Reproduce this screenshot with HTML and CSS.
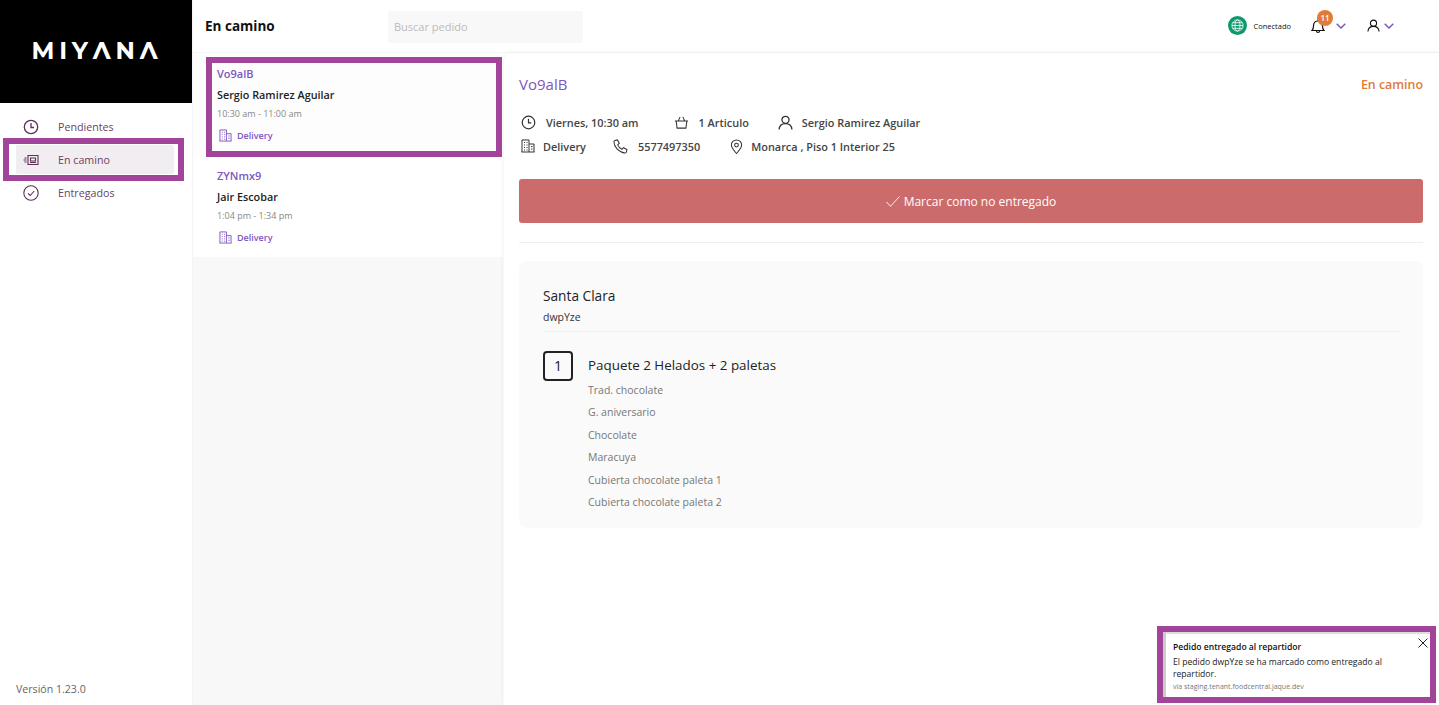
FILE: index.html
```html
<!DOCTYPE html>
<html lang="es">
<head>
  <meta charset="UTF-8">
  <meta name="viewport" content="width=device-width, initial-scale=1.0">
  <title>Miyana - En camino</title>
  <link rel="stylesheet" href="styles.css">
</head>
<body>
  <svg class="defs" width="0" height="0">
    <symbol id="i-building" viewBox="0 0 14 14">
      <path d="M1 13V1h7v12M8 5h5v8M.5 13h13M3 3.5h1M5.500 3.5h1M3 6h1M5.500 6h1M3 8.5h1M5.500 8.5h1M3 11h1M5.500 11h1M10 7.500h1.500M10 10h1.500" fill="none" stroke="currentColor" stroke-width="1"/>
    </symbol>
    <symbol id="i-clock" viewBox="0 0 16 16">
      <circle cx="8" cy="8" r="6.7" fill="none" stroke="currentColor" stroke-width="1.3"/>
      <path d="M8 4v4.500h3" fill="none" stroke="currentColor" stroke-width="1.3"/>
    </symbol>
    <symbol id="i-chevron" viewBox="0 0 10 6">
      <path d="M.7.800 5 5l4.300-4.200" fill="none" stroke="currentColor" stroke-width="1.5"/>
    </symbol>
    <symbol id="i-user" viewBox="0 0 14 14">
      <circle cx="7" cy="4.5" r="3.3" fill="none" stroke="currentColor" stroke-width="1.2"/>
      <path d="M1 13.500c.3-3.500 2.800-5.500 6-5.500s5.700 2 6 5.500" fill="none" stroke="currentColor" stroke-width="1.2"/>
    </symbol>
  </svg>

  <aside class="sidebar">
    <div class="logo">MIYΛNΛ</div>
    <nav class="nav">
      <a class="nav-item">
        <svg class="nav-icon"><use href="#i-clock"/></svg>
        Pendientes
      </a>
      <a class="nav-item active marked">
        <svg class="nav-icon" viewBox="0 0 16 16">
          <path d="M5 3.500h10v9H5zM7.500 6h5v3h-5zM7 10.500h6M1.500 6h2M.5 8h3M1.500 10h2" fill="none" stroke="currentColor" stroke-width="1.1"/>
        </svg>
        En camino
      </a>
      <a class="nav-item">
        <svg class="nav-icon" viewBox="0 0 16 16">
          <circle cx="8" cy="8" r="7.2" fill="none" stroke="currentColor" stroke-width="1.1"/>
          <path d="m5 8.300 2.200 2.200L11.200 6" fill="none" stroke="currentColor" stroke-width="1.1"/>
        </svg>
        Entregados
      </a>
    </nav>
    <div class="version">Versión 1.23.0</div>
  </aside>

  <div class="main">
    <header class="topbar">
      <h1 class="page-title">En camino</h1>
      <div class="search">Buscar pedido</div>
      <div class="top-actions">
        <div class="status">
          <span class="status-dot">
            <svg width="13" height="13" viewBox="0 0 14 14">
              <g fill="none" stroke="#fff" stroke-width=".9">
                <circle cx="7" cy="7" r="6"/>
                <ellipse cx="7" cy="7" rx="2.7" ry="6"/>
                <path d="M1 7h12M1.800 4h10.400M1.800 10h10.400"/>
              </g>
            </svg>
          </span>
          Conectado
        </div>
        <div class="bell">
          <svg width="14" height="16" viewBox="0 0 14 16">
            <path d="M1 12.500c1.200-1 1.500-2.200 1.500-4.500 0-3 1.800-5 4.500-5s4.500 2 4.500 5c0 2.300.3 3.500 1.500 4.500zM5.500 13c0 2 3 2 3 0M7 1v2" fill="none" stroke="#111" stroke-width="1.2"/>
          </svg>
          <span class="badge">11</span>
        </div>
        <svg class="chevron chevron-bell"><use href="#i-chevron"/></svg>
        <svg class="top-user"><use href="#i-user"/></svg>
        <svg class="chevron"><use href="#i-chevron"/></svg>
      </div>
    </header>

    <div class="content">
      <section class="order-list">
        <article class="order-card marked">
          <div class="order-id">Vo9alB</div>
          <div class="order-name">Sergio Ramirez Aguilar</div>
          <div class="order-time">10:30 am - 11:00 am</div>
          <div class="order-type"><svg class="type-icon"><use href="#i-building"/></svg>Delivery</div>
        </article>
        <article class="order-card">
          <div class="order-id">ZYNmx9</div>
          <div class="order-name">Jair Escobar</div>
          <div class="order-time">1:04 pm - 1:34 pm</div>
          <div class="order-type"><svg class="type-icon"><use href="#i-building"/></svg>Delivery</div>
        </article>
      </section>

      <section class="detail">
        <div class="detail-head">
          <span class="detail-id">Vo9alB</span>
          <span class="detail-status">En camino</span>
        </div>

        <div class="meta-row meta-first">
          <span class="meta meta-a"><svg class="meta-icon"><use href="#i-clock"/></svg>Viernes, 10:30 am</span>
          <span class="meta meta-b">
            <svg class="meta-icon" viewBox="0 0 16 16">
              <path d="M1 6.500h14M2.300 6.500l1 7.500h9.400l1-7.500M4.500 6.500 6.500 2M11.500 6.500 9.500 2" fill="none" stroke="currentColor" stroke-width="1.1"/>
            </svg>1 Articulo</span>
          <span class="meta"><svg class="meta-icon"><use href="#i-user"/></svg>Sergio Ramirez Aguilar</span>
        </div>
        <div class="meta-row">
          <span class="meta meta-c"><svg class="meta-icon small"><use href="#i-building"/></svg>Delivery</span>
          <span class="meta meta-d">
            <svg class="meta-icon" viewBox="0 0 16 16">
              <path d="M2 1.500 4.700 1l2 3.500L5 6.300c.8 2 2.300 3.600 4.500 4.700l1.800-1.700 3.500 2-.5 2.700c-.2.500-.8 1-1.500 1C6.500 14.500 1 8.500 1 3c0-.7.500-1.300 1-1.500z" fill="none" stroke="currentColor" stroke-width="1.1"/>
            </svg>5577497350</span>
          <span class="meta meta-e">
            <svg class="meta-icon" viewBox="0 0 16 16">
              <path d="M8 15.500C5 12 2.500 9.500 2.500 6.500a5.500 5.500 0 0 1 11 0c0 3-2.500 5.500-5.500 9z" fill="none" stroke="currentColor" stroke-width="1.1"/>
              <circle cx="8" cy="6.500" r="2" fill="none" stroke="currentColor" stroke-width="1.1"/>
            </svg>Monarca , Piso 1 Interior 25</span>
        </div>

        <button class="undeliver">
          <svg width="14" height="11" viewBox="0 0 14 11"><path d="m.5 6 4 4.300L13.500.5" fill="none" stroke="#fff" stroke-width=".9"/></svg>
          Marcar como no entregado
        </button>
        <hr class="divider">

        <div class="store-card">
          <div class="store-name">Santa Clara</div>
          <div class="store-code">dwpYze</div>
          <div class="product">
            <div class="qty">1</div>
            <div>
              <div class="product-name">Paquete 2 Helados + 2 paletas</div>
              <ul class="options">
                <li>Trad. chocolate</li>
                <li>G. aniversario</li>
                <li>Chocolate</li>
                <li>Maracuya</li>
                <li>Cubierta chocolate paleta 1</li>
                <li>Cubierta chocolate paleta 2</li>
              </ul>
            </div>
          </div>
        </div>
      </section>
    </div>
  </div>

  <div class="toast">
    <svg class="toast-close" viewBox="0 0 10 10"><path d="m.5.500 9 9M9.500.500l-9 9" fill="none" stroke="#222" stroke-width="1"/></svg>
    <div class="toast-title">Pedido entregado al repartidor</div>
    <div class="toast-body">El pedido dwpYze se ha marcado como entregado al repartidor.</div>
    <div class="toast-via">vía staging.tenant.foodcentral.jaque.dev</div>
  </div>
</body>
</html>
```

FILE: styles.css
```css
* {
  box-sizing: border-box;
}

body {
  font-family: "Open Sans", sans-serif;
  background-color: #fff;
  color: #222;
  display: flex;
  height: 100vh;
  margin: 0;
  overflow: hidden;
}

.defs {
  position: absolute;
}

/* purple boxes drawn on top of the screenshot */
.marked {
  position: relative;
}

.marked::after {
  content: "";
  position: absolute;
  border: 6px solid #a3449b;
  pointer-events: none;
}

/* Sidebar */
.sidebar {
  width: 193px;
  flex-shrink: 0;
  display: flex;
  flex-direction: column;
  border-right: 1px solid #f4f4f4;
}

.logo {
  background-color: #000;
  color: #fff;
  height: 103px;
  padding: 0 0 2px 2px;
  display: flex;
  align-items: center;
  justify-content: center;
  font-family: "Montserrat", "Lato", sans-serif;
  font-weight: 700;
  font-size: 24px;
  letter-spacing: 4.8px;
}

.nav {
  display: flex;
  flex-direction: column;
  gap: 4px;
  padding: 9px 18px 0 16px;
  flex: 1;
}

.nav-item {
  height: 29px;
  display: flex;
  align-items: center;
  gap: 19px;
  padding-left: 7px;
  font-size: 10.7px;
  color: #6d3f63;
  border-radius: 2px;
}

.nav-item.active {
  background-color: #f1edf0;
}

.nav-item.marked::after {
  top: -7px;
  bottom: -7px;
  left: -13px;
  right: -10px;
}

.nav-icon {
  width: 16px;
  height: 16px;
  color: #5d2f58;
}

.version {
  font-size: 10.6px;
  color: #666;
  padding: 0 0 9px 16px;
}

/* Top bar */
.main {
  flex: 1;
  min-width: 0;
  display: flex;
  flex-direction: column;
}

.topbar {
  height: 53px;
  flex-shrink: 0;
  display: flex;
  align-items: center;
  padding-left: 12px;
  border-bottom: 1px solid #f7f7f7;
}

.page-title {
  font-size: 13.5px;
  font-weight: 700;
  color: #111;
  margin: 0 0 1px;
  width: 183px;
}

.search {
  width: 195px;
  height: 32px;
  background-color: #f8f8f8;
  border-radius: 3px;
  font-size: 11px;
  color: #bbb;
  padding: 8px 6px;
  margin-top: 2px;
}

.top-actions {
  margin: 0 45px 1px auto;
  display: flex;
  align-items: center;
}

.status {
  display: flex;
  align-items: center;
  gap: 6px;
  font-size: 7.5px;
  color: #111;
  margin-right: 20px;
}

.status-dot {
  width: 19px;
  height: 19px;
  border-radius: 50%;
  background-color: #0a9a6c;
  display: flex;
  align-items: center;
  justify-content: center;
}

.bell {
  position: relative;
  width: 14px;
  height: 16px;
  margin-top: -2px;
}

.badge {
  position: absolute;
  top: -7px;
  left: 6px;
  width: 16px;
  height: 16px;
  border-radius: 50%;
  background-color: #e07b39;
  color: #fff;
  font-size: 8px;
  font-weight: 600;
  text-align: center;
  line-height: 16px;
}

.chevron {
  width: 10px;
  height: 6px;
  color: #7e57c2;
}

.chevron-bell {
  margin: 0 21px 0 11px;
}

.top-user {
  width: 13px;
  height: 13px;
  color: #111;
  margin-right: 4px;
}

/* Order list */
.content {
  flex: 1;
  min-height: 0;
  display: flex;
}

.order-list {
  width: 310px;
  flex-shrink: 0;
  background-color: #f8f8f8;
}

.order-card {
  height: 102px;
  padding: 13px 24px 0;
  background-color: #fff;
}

.order-card.marked {
  background-color: #fdfdfd;
}

.order-card.marked::after {
  top: 4px;
  left: 13px;
  right: 1px;
  bottom: -2px;
}

.order-id {
  font-size: 11px;
  font-weight: 600;
  color: #7e57c2;
  line-height: 15px;
}

.order-name {
  font-size: 10.8px;
  font-weight: 600;
  color: #222;
  line-height: 15px;
  margin-top: 6px;
}

.order-time {
  font-size: 9px;
  color: #888;
  line-height: 12px;
  margin-top: 6px;
}

.order-type {
  display: flex;
  align-items: center;
  gap: 5px;
  font-size: 9px;
  font-weight: 600;
  color: #7e57c2;
  margin-top: 8.5px;
  padding-left: 2px;
  line-height: 14px;
}

.type-icon {
  width: 13px;
  height: 13px;
}

/* Order detail */
.detail {
  flex: 1;
  min-width: 0;
  margin-left: 1px;
  padding: 21px 16px 0 15px;
  border-radius: 8px 0 0 0;
  box-shadow: 0 0 5px rgba(0, 0, 0, 0.08);
  background-color: #fff;
}

.detail-head {
  display: flex;
  justify-content: space-between;
  align-items: center;
  height: 20px;
}

.detail-id {
  font-size: 15px;
  color: #7e57c2;
}

.detail-status {
  font-size: 12.4px;
  font-weight: 600;
  color: #e07b39;
}

.meta-row {
  display: flex;
  align-items: center;
  height: 16px;
  margin-top: 8px;
  font-size: 10.9px;
  font-weight: 600;
  color: #444;
}

.meta-first {
  margin-top: 20px;
}

.meta {
  display: flex;
  align-items: center;
  gap: 9px;
}

.meta-a { margin: 0 35px 0 2px; gap: 10px; }
.meta-b { margin-right: 29px; gap: 10px; }
.meta-c { margin: 0 27px 0 2px; gap: 8px; }
.meta-d { margin-right: 29px; gap: 10px; }
.meta-e { gap: 7px; }

.meta-icon {
  width: 15px;
  height: 15px;
  flex-shrink: 0;
  color: #333;
}

.meta-icon.small {
  width: 14px;
  height: 14px;
}

.undeliver {
  display: flex;
  align-items: center;
  justify-content: center;
  gap: 4px;
  width: 100%;
  height: 44px;
  margin-top: 25px;
  border: none;
  border-radius: 3px;
  background-color: #cb6b6b;
  color: #fff;
  font-family: inherit;
  font-size: 12px;
}

.divider {
  border: none;
  border-top: 1px solid #eee;
  margin: 19px 0 18px;
}

.store-card {
  height: 267px;
  padding: 24px 23px 0 24px;
  background-color: #fafafa;
  border-radius: 8px;
}

.store-name {
  font-size: 13.7px;
  line-height: 22px;
  color: #222;
}

.store-code {
  font-size: 10.5px;
  line-height: 14px;
  color: #333;
  margin-top: 3px;
  padding-bottom: 7px;
  border-bottom: 1px solid #eee;
}

.product {
  display: flex;
  gap: 15px;
  margin-top: 19px;
}

.qty {
  width: 30px;
  height: 30px;
  border: 2px solid #222;
  border-radius: 4px;
  text-align: center;
  font-size: 14px;
  line-height: 26px;
  flex-shrink: 0;
}

.product-name {
  font-size: 13.4px;
  line-height: 28px;
  color: #222;
}

.options {
  list-style: none;
  margin: 0;
  padding: 0;
  font-size: 10.5px;
  color: #777;
}

.options li {
  line-height: 22.4px;
}

/* Notification */
.toast {
  position: fixed;
  left: 1157px;
  top: 626px;
  width: 279px;
  height: 77px;
  border: 6px solid #a3449b;
  background-color: #fff;
  padding: 8px 22px 0 10px;
  box-shadow: inset 3px 0 0 #ccc, inset 0 2px 0 #ddd;
}

.toast-close {
  position: absolute;
  top: 6px;
  right: 2px;
  width: 10px;
  height: 10px;
}

.toast-title {
  font-size: 8.6px;
  font-weight: 600;
  color: #111;
  line-height: 14px;
}

.toast-body {
  font-size: 8.6px;
  color: #222;
  line-height: 12px;
  margin-top: 2px;
}

.toast-via {
  font-size: 7px;
  color: #777;
  line-height: 10px;
  margin-top: 2px;
}
```
